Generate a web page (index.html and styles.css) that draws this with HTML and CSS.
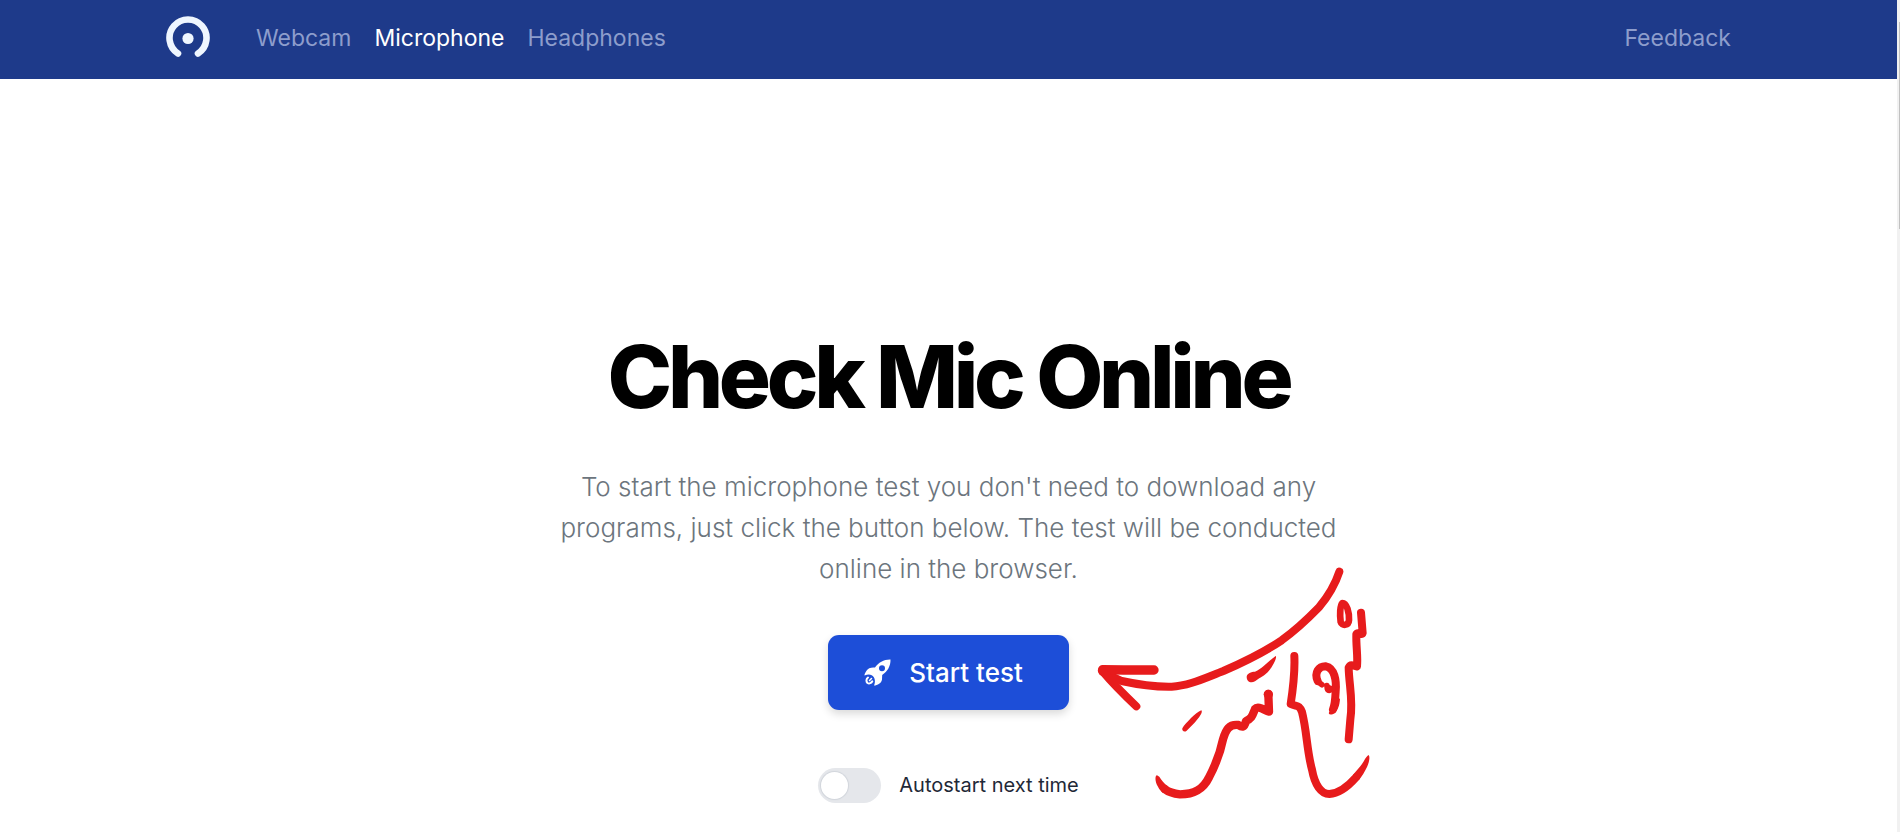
FILE: index.html
```
<!DOCTYPE html>
<html lang="en">
<head>
    <meta charset="UTF-8">
    <meta name="viewport" content="width=device-width, initial-scale=1.0">
    <title>Check Mic Online</title>
    <link rel="stylesheet" href="styles.css">
</head>
<body>
    <div class="page">
        <header class="header">
            <nav class="nav">
                <a class="logo" href="#" aria-label="Home">
                    <svg viewBox="0 0 44 44" width="44" height="44">
                        <path d="M12 37.500A18.500 18.500 0 1 1 32 37.500" fill="none" stroke="#eff6ff" stroke-width="6.600" stroke-linecap="round"/>
                        <circle cx="22" cy="22.500" r="5.600" fill="#eff6ff"/>
                    </svg>
                </a>
                <a class="nav-link" href="#webcam">Webcam</a>
                <a class="nav-link active" href="#microphone">Microphone</a>
                <a class="nav-link" href="#headphones">Headphones</a>
                <a class="nav-link feedback" href="#feedback">Feedback</a>
            </nav>
        </header>

        <main class="hero">
            <h1>Check Mic Online</h1>
            <p class="lead">To start the microphone test you don't need to download any programs, just click the button below. The test will be conducted online in the browser.</p>
            <div class="start">
                <button class="start-button" type="button">
                    <svg viewBox="0 0 27 27" width="27" height="27">
                        <path fill="#fff" fill-rule="evenodd" d="M26.500.500C20 .300 14.500 3.500 11 8.500C7.500 8 4 9 2.300 12C1 14 .300 15.500.500 16.500C3 15.500 5.500 15 7.200 16C9.800 17 10.500 19 10.800 21C11.200 23.500 10.500 25.500 10 26.500C13.500 26.500 17.500 24 18 20.500L18.200 16C23.500 12.500 26.700 7 26.500.500ZM18 6.300A3 3 0 1 1 18 12.300A3 3 0 1 1 18 6.300Z"/>
                        <path fill="none" stroke="#fff" stroke-width="2" stroke-linecap="round" d="M4 18.500C2 20 2 22.500 3.500 24C5.300 25 7.500 24 8.300 22.300"/>
                        <path fill="none" stroke="#fff" stroke-width="1.500" stroke-linecap="round" d="M5.500 21.500L7.500 19.500"/>
                    </svg>
                    Start test
                </button>
                <svg class="scribble" viewBox="0 0 900 780" aria-hidden="true">
                    <g fill="none" stroke="#e71b1c" stroke-width="24" stroke-linecap="round" stroke-linejoin="round">
                        <path d="M778 65C765 105 744 139 717 172C682 208 648 240 605 271C550 308 490 337 430 363C375 384 325 408 275 410C225 411 175 404 125 393L68 366"/>
                        <path d="M68 359L130 360L222 360" stroke-width="28"/>
                        <path d="M66 362C98 400 134 436 169 469"/>
                        <path d="M787 159C780 166 779 195 782 216C785 228 806 228 807 210C808 189 801 159 787 159Z" stroke-width="20"/>
                        <path d="M843 188L848 249C846 258 833 243 829 253C828 290 834 319 831 349C825 352 813 337 806 353C807 405 820 450 811 508L806 568"/>
                        <path d="M643 318C645 361 640 410 632 462C650 471 657 462 666 486C681 545 680 600 696 659C704 704 723 732 748 732C778 730 806 707 828 682"/>
                        <path d="M713 393C702 368 716 348 738 349C763 354 770 391 767 424C766 444 765 464 759 478"/>
                        <path d="M718 398L726 404M741 407L742 416C746 424 751 421 759 415" stroke-width="17"/>
                        <path d="M565 432L567 485C555 483 535 465 525 477C517 496 517 505 498 513C493 534 486 532 475 525C447 522 438 538 429 568C420 612 405 648 387 682C369 719 342 733 300 733C280 731 266 727 255 718" stroke-width="25"/>
                    </g>
                    <g fill="#e71b1c">
                        <path d="M587 318C592 321 580 348 563 367C546 383 537 384 525 394C512 401 500 395 500 380C501 370 514 365 525 365C550 354 565 333 587 318Z"/>
                        <path d="M364 481C370 486 357 504 343 519L320 542C313 548 305 542 307 535C312 525 323 515 333 504C344 494 355 485 364 481Z"/>
                        <path d="M231 676C225 676 224 695 234 710C238 718 243 724 249 729L263 708C252 700 243 688 238 680Z"/>
                        <path d="M865 615C871 618 868 636 861 651C854 666 846 678 837 690L819 674C830 662 839 652 846 642C853 632 858 620 865 615Z"/>
                        <path d="M757 440L780 446C779 465 774 484 758 493C746 496 744 490 749 484Z"/>
                        <circle cx="565" cy="433" r="14"/>
                        <circle cx="746" cy="416" r="11"/>
                    </g>
                </svg>
            </div>
            <label class="autostart">
                <input type="checkbox" role="switch">
                Autostart next time
            </label>
        </main>
    </div>
    <div class="scroll-track"><div class="scroll-thumb"></div></div>
</body>
</html>
```
FILE: styles.css
```
:root {
    --navy: #1e3a8a;
    --primary: #1d4ed8;
    --link: #8d9dcc;
    --text: #1f2937;
    --text-secondary: #6c757d;
    --switch: #e5e7eb;
}

* {
    margin: 0;
    padding: 0;
    box-sizing: border-box;
}

body {
    display: flex;
    min-height: 100vh;
    font-family: Inter, sans-serif;
    background-color: #fff;
    color: var(--text);
}

.page {
    flex: 1;
}

.header {
    background-color: var(--navy);
    padding: 16px 24px 19px;
}

.nav {
    display: flex;
    align-items: center;
    gap: 23px;
    max-width: 1565px;
    margin: 0 auto;
}

.logo {
    display: flex;
    margin-right: 23px;
}

.nav-link {
    color: var(--link);
    font-size: 23px;
    font-weight: 400;
    line-height: 44px;
    text-decoration: none;
}

.nav-link.active {
    color: #fff;
}

.feedback {
    margin-left: auto;
}

.hero {
    display: flex;
    flex-direction: column;
    align-items: center;
    padding: 252px 24px 24px;
    text-align: center;
}

h1 {
    color: #000;
    font-size: 87px;
    font-weight: 800;
    line-height: 92px;
    letter-spacing: -0.05em;
}

.lead {
    max-width: 780px;
    margin-top: 43px;
    color: var(--text-secondary);
    font-size: 26px;
    font-weight: 300;
    line-height: 41px;
}

.start {
    position: relative;
    margin-top: 46px;
}

.start-button {
    display: flex;
    align-items: center;
    gap: 18px;
    padding: 16px 46px 16px 36px;
    border: none;
    border-radius: 11px;
    background-color: var(--primary);
    box-shadow: 0 4px 8px rgba(0, 0, 0, 0.15);
    color: #fff;
    font-family: inherit;
    font-size: 26px;
    font-weight: 500;
    line-height: 43px;
    cursor: pointer;
}

/* hand-drawn pointer beside the button */
.scribble {
    position: absolute;
    top: -85px;
    left: calc(100% + 11px);
    width: 300px;
    height: 260px;
    pointer-events: none;
}

.autostart {
    display: flex;
    align-items: center;
    gap: 18px;
    margin-top: 58px;
    font-size: 20px;
    line-height: 35px;
    cursor: pointer;
}

.autostart input {
    appearance: none;
    display: flex;
    width: 63px;
    height: 35px;
    padding: 4px 3px;
    border-radius: 18px;
    background-color: var(--switch);
    cursor: pointer;
}

.autostart input::before {
    content: "";
    width: 27px;
    height: 27px;
    border-radius: 50%;
    background-color: #fff;
    box-shadow: 0 0 1px 1px #d1d5db;
}

.autostart input:checked {
    justify-content: flex-end;
    background-color: var(--primary);
}

.scroll-track {
    width: 3px;
    padding: 22px 0 0 2px;
    background-color: #f1f1f1;
}

.scroll-thumb {
    height: 207px;
    background-color: #c1c1c1;
}
```
